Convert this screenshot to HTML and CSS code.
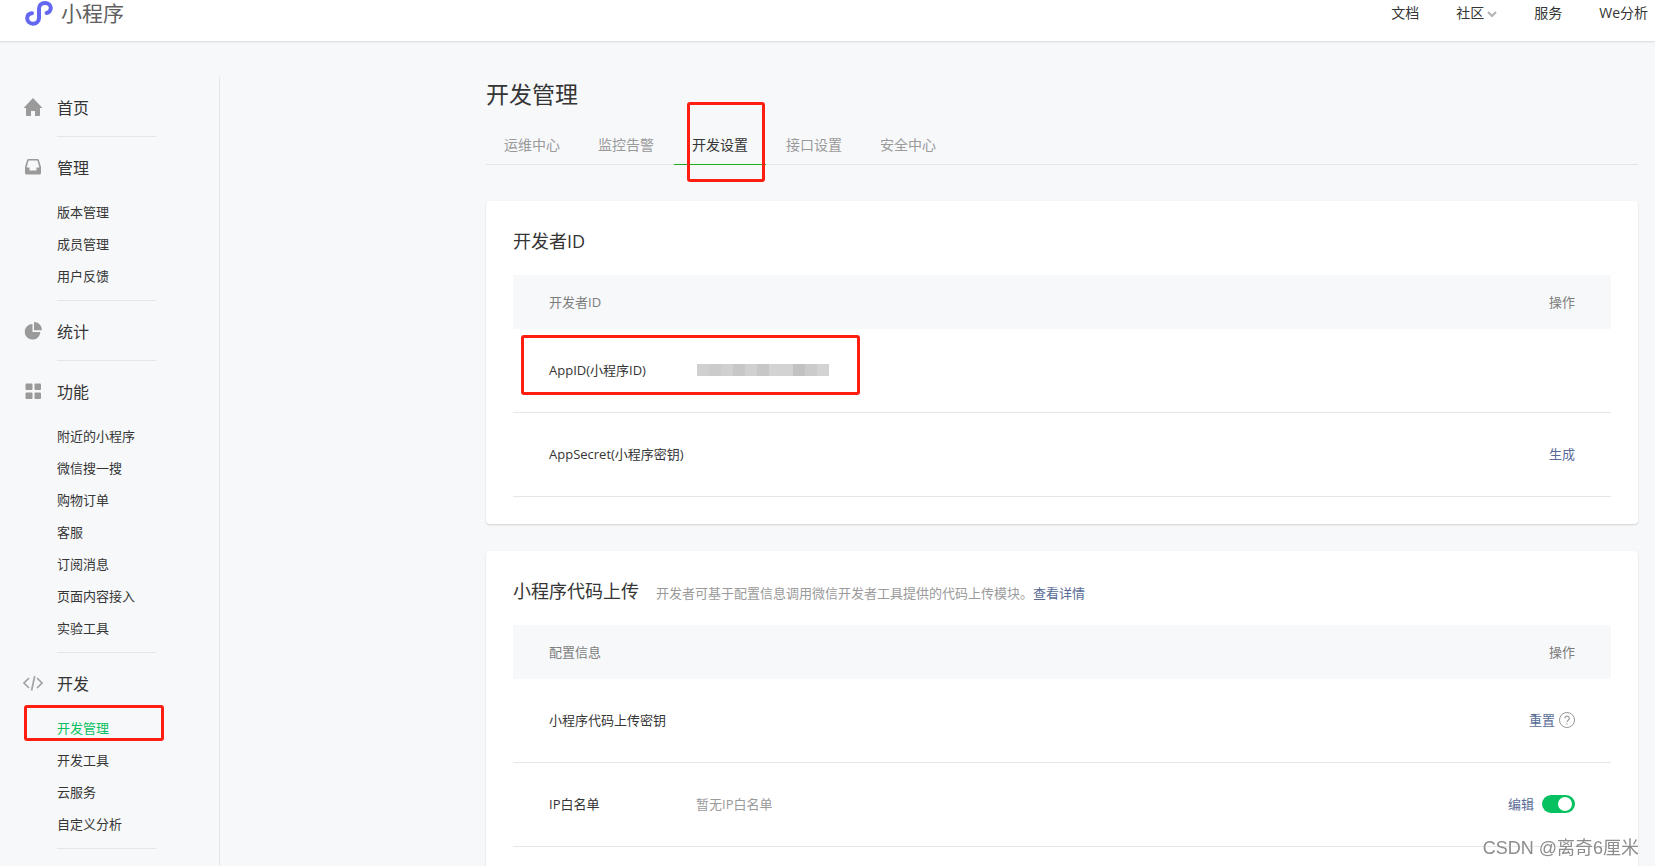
FILE: index.html
```html
<!DOCTYPE html>
<html lang="zh-CN">
<head>
<meta charset="utf-8">
<title>小程序</title>
<link rel="stylesheet" href="styles.css">
</head>
<body>
<header class="topbar">
  <a class="brand" href="#">
    <svg class="brand-mark" width="28" height="26" viewBox="0 0 28 26" fill="none" stroke="#6467f0" stroke-width="4" stroke-linecap="round" aria-hidden="true">
      <path d="M7 13.3C4.200 13.600 2.200 15.500 2.200 18.300C2.200 21.300 4.600 23.700 8 23.700C11.500 23.700 14 21.200 14 18V8.500C14 5.300 16.500 2.900 20 2.900C23.400 2.900 25.800 5.200 25.800 8C25.800 10.600 23.900 12.600 21.600 13"/>
    </svg>
    <span>小程序</span>
  </a>
  <nav class="topnav">
    <a href="#">文档</a>
    <a href="#">社区<svg class="chevron" width="10" height="7" viewBox="0 0 10 7" fill="none" stroke="#b2b2b2" stroke-width="2" aria-hidden="true"><path d="M1 1l4 4 4-4"/></svg></a>
    <a href="#">服务</a>
    <a href="#">We分析</a>
  </nav>
</header>
<div class="layout">
  <nav class="sidebar">
    <section class="group">
      <h2><svg width="20" height="20" viewBox="0 0 20 20" fill="#9a9a9a" aria-hidden="true"><path d="M10 1L19.500 11H17V18Q17 19 16 19H12V14H8V19H4Q3 19 3 18V11H.5z"/></svg><a href="#">首页</a></h2>
    </section>
    <section class="group">
      <h2><svg width="20" height="20" viewBox="0 0 20 20" aria-hidden="true"><path fill="#9a9a9a" fill-rule="evenodd" d="M5.500 2H14.500Q15.500 2 15.900 3L18 10V16Q18 17.500 16.500 17.500H3.500Q2 17.500 2 16V10L4.100 3Q4.500 2 5.500 2zM5.600 3.500L3.600 10.500H6.500V13.500H13.500V10.500H16.400L14.400 3.500z"/></svg><a href="#">管理</a></h2>
      <ul>
        <li><a href="#">版本管理</a></li>
        <li><a href="#">成员管理</a></li>
        <li><a href="#">用户反馈</a></li>
      </ul>
    </section>
    <section class="group">
      <h2><svg width="20" height="20" viewBox="0 0 20 20" fill="#9a9a9a" aria-hidden="true"><path d="M9.500 3V11H17.300A7.800 7.800 0 1 1 9.500 3z"/><path d="M11 1A8 8 0 0 1 19 9.300H11z"/></svg><a href="#">统计</a></h2>
    </section>
    <section class="group">
      <h2><svg width="20" height="20" viewBox="0 0 20 20" fill="#9a9a9a" aria-hidden="true"><rect x="2.500" y="2.500" width="7" height="6.500" rx="1"/><rect x="11.500" y="2.500" width="6.500" height="6.500" rx="1"/><rect x="2.500" y="11.500" width="7" height="6.500" rx="1"/><rect x="11.500" y="11.500" width="6.500" height="6.500" rx="1"/></svg><a href="#">功能</a></h2>
      <ul>
        <li><a href="#">附近的小程序</a></li>
        <li><a href="#">微信搜一搜</a></li>
        <li><a href="#">购物订单</a></li>
        <li><a href="#">客服</a></li>
        <li><a href="#">订阅消息</a></li>
        <li><a href="#">页面内容接入</a></li>
        <li><a href="#">实验工具</a></li>
      </ul>
    </section>
    <section class="group">
      <h2><svg width="20" height="20" viewBox="0 0 20 20" fill="none" stroke="#a3a3a3" stroke-width="1.700" aria-hidden="true"><path d="M6 5L1 10l5 5M14 5l5 5-5 5M11.700 3L8.600 17.500"/></svg><a href="#">开发</a></h2>
      <ul>
        <li class="current"><a href="#">开发管理</a></li>
        <li><a href="#">开发工具</a></li>
        <li><a href="#">云服务</a></li>
        <li><a href="#">自定义分析</a></li>
      </ul>
    </section>
  </nav>
  <main class="content">
    <h1>开发管理</h1>
    <nav class="tabs">
      <a href="#">运维中心</a>
      <a href="#">监控告警</a>
      <a class="active" href="#">开发设置</a>
      <a href="#">接口设置</a>
      <a href="#">安全中心</a>
    </nav>
    <section class="card">
      <div class="card-head"><h2>开发者ID</h2></div>
      <table>
        <thead><tr><th class="label">开发者ID</th><th></th><th class="ops">操作</th></tr></thead>
        <tbody>
          <tr>
            <td class="label marked">AppID(小程序ID)</td>
            <td><span class="masked"><i class="m2"></i><i class="m3"></i><i class="m2"></i><i class="m4"></i><i class="m2"></i><i class="m4"></i><i class="m1"></i><i class="m1"></i><i class="m5"></i><i class="m3"></i><i class="m1"></i></span></td>
            <td class="ops"></td>
          </tr>
          <tr><td class="label">AppSecret(小程序密钥)</td><td></td><td class="ops"><a href="#">生成</a></td></tr>
        </tbody>
      </table>
    </section>
    <section class="card">
      <div class="card-head">
        <h2>小程序代码上传</h2>
        <p>开发者可基于配置信息调用微信开发者工具提供的代码上传模块。<a href="#">查看详情</a></p>
      </div>
      <table>
        <thead><tr><th class="label">配置信息</th><th></th><th class="ops">操作</th></tr></thead>
        <tbody>
          <tr>
            <td class="label">小程序代码上传密钥</td><td></td>
            <td class="ops"><div class="actions tight"><a href="#">重置</a><svg width="16" height="16" viewBox="0 0 16 16" fill="none" stroke="#9a9a9a" aria-hidden="true"><circle cx="8" cy="8" r="7.500"/><path d="M5.700 6.300a2.300 2.200 0 1 1 3.700 1.700c-.9.700-1.400 1-1.400 2M8 11.200v1.300" stroke-width="1.200"/></svg></div></td>
          </tr>
          <tr>
            <td class="label">IP白名单</td><td class="muted">暂无IP白名单</td>
            <td class="ops"><div class="actions"><a href="#">编辑</a><input class="switch" type="checkbox" role="switch" aria-label="IP白名单" checked></div></td>
          </tr>
        </tbody>
      </table>
    </section>
  </main>
</div>
<div class="watermark">CSDN @离奇6厘米</div>
</body>
</html>
```

FILE: styles.css
```css
*, *::before, *::after { box-sizing: border-box; }
body {
  margin: 0;
  height: 100vh;
  display: flex;
  flex-direction: column;
  overflow: hidden;
  background: #f7f8fa;
  color: #353535;
  font-family: "Open Sans", "Noto Sans CJK SC", sans-serif;
  font-size: 13px;
  font-weight: 400;
}
a { color: inherit; text-decoration: none; }
h1, h2, p, ul { margin: 0; padding: 0; font-weight: 400; }
ul { list-style: none; }

.topbar {
  flex: none;
  display: flex;
  justify-content: space-between;
  padding: 0 7px 15px 25px;
  line-height: 26px;
  background: #fff;
  border-bottom: 1px solid #e2e3e5;
  box-shadow: 0 1px 1px #eeeff1;
}
.brand { display: flex; gap: 8px; font-size: 21px; color: #606060; }
.topnav { display: flex; gap: 37px; font-size: 14px; }
.topnav a { display: flex; align-items: center; }
.chevron { margin: 3px 0 0 3px; }

.layout { flex: 1; min-height: 0; display: flex; padding: 35px 17px 0 0; }
.sidebar { flex: none; width: 220px; padding: 1px 0 0 23px; border-right: 1px solid #e4e6e8; }
.group { padding-bottom: 1px; }
.group::after {
  content: "";
  display: block;
  width: 99px;
  margin-left: 34px;
  border-bottom: 1px solid #e4e6e8;
}
.group h2 { display: flex; align-items: center; gap: 14px; height: 58px; font-size: 16px; }
.group ul { padding: 0 0 8px 34px; }
.group li { position: relative; line-height: 32px; }
.current { color: #07c160; }
.current::after {
  content: "";
  position: absolute;
  left: -33px;
  top: -7px;
  width: 140px;
  height: 36px;
  border: 3px solid #ff1e10;
  border-radius: 3px;
  pointer-events: none;
}

.content { flex: 1; min-width: 0; margin-left: 266px; }
h1 { font-size: 23px; line-height: 34px; }
.tabs { display: flex; gap: 2px; margin: 15px 0 36px; border-bottom: 1px solid #e4e6e8; color: #9a9a9a; font-size: 14px; }
.tabs a { position: relative; padding: 0 18px; margin-bottom: -1px; line-height: 38px; border-bottom: 1px solid transparent; }
.tabs .active { color: #353535; border-color: #1aad19; }
.tabs .active::after {
  content: "";
  position: absolute;
  left: 13px;
  top: -24px;
  width: 78px;
  height: 80px;
  border: 3px solid #ff1e10;
  border-radius: 3px;
  pointer-events: none;
}

.card {
  margin-bottom: 27px;
  padding: 27px;
  background: #fff;
  border-radius: 4px;
  box-shadow: 0 1px 2px rgba(0, 0, 0, .16);
}
.card-head { display: flex; align-items: baseline; gap: 17px; margin-bottom: 20px; }
.card-head h2 { font-size: 18px; line-height: 27px; }
.card-head p { color: #9a9a9a; line-height: 18px; }
.card-head a, .ops a { color: #576b95; }
table { width: 100%; border-collapse: separate; border-spacing: 0; table-layout: fixed; }
th { height: 54px; padding: 0 0 2px; background: #f6f8f9; color: #7d7d7d; font-weight: 400; text-align: left; }
td { height: 84px; padding: 0 0 2px; border-bottom: 1px solid #e4e6e8; }
.label { width: 183px; padding-left: 36px; white-space: nowrap; }
.ops { width: 200px; padding-right: 36px; text-align: right; }
.muted { color: #9a9a9a; }
.marked { position: relative; }
.marked::after {
  content: "";
  position: absolute;
  left: 8px;
  top: 6px;
  width: 339px;
  height: 60px;
  border: 3px solid #ff1e10;
  border-radius: 3px;
}
.masked { display: flex; width: 132px; margin-left: 1px; }
.masked i { flex: 1; height: 12px; }
.m1 { background: #d3d3d3; }
.m2 { background: #d0d0d0; }
.m3 { background: #cbcbcb; }
.m4 { background: #c7c7c7; }
.m5 { background: #c2c2c2; }
.actions { display: flex; align-items: center; justify-content: flex-end; gap: 8px; }
.tight { gap: 4px; }
.switch {
  appearance: none;
  width: 33px;
  height: 18px;
  margin: 0;
  padding: 2px 3px;
  border-radius: 9px;
  background: #07c160;
}
.switch::before {
  content: "";
  display: block;
  width: 14px;
  height: 14px;
  margin-left: auto;
  border-radius: 50%;
  background: #fff;
}
.watermark {
  position: fixed;
  right: 16px;
  bottom: 5px;
  font-family: "Liberation Sans", "Noto Sans CJK SC", sans-serif;
  font-size: 18px;
  line-height: 26px;
  color: #8c8c8c;
  text-shadow: 1px 1px 1px #fff;
}
```
